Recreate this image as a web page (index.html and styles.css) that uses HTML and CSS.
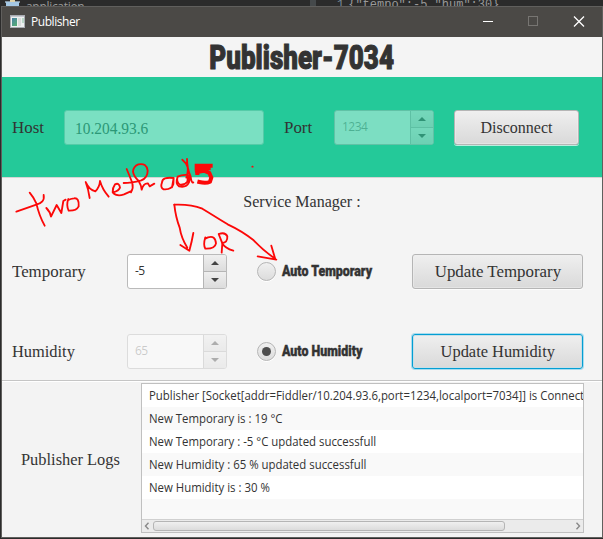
FILE: index.html
```html
<!DOCTYPE html>
<html lang="en">
<head>
<meta charset="utf-8">
<title>Publisher</title>
<link rel="stylesheet" href="styles.css">
</head>
<body>
<div class="desktop">
  <div class="backdrop">
    <svg class="backdrop-icon" width="16" height="8" viewBox="0 0 16 8"><path d="M0 1h15v2H0z" fill="#8293a0"/><path d="M1 2h13v5H1z" fill="#a5c8e4"/><path d="M5 0h5v2H5z" fill="#dfd2aa"/></svg>
    <span class="backdrop-name">application</span>
    <span class="backdrop-gutter"></span>
    <span class="backdrop-code"><i>1</i>{"tempo":-5,"hum":30}</span>
  </div>
  <main class="window">
    <header class="titlebar">
      <svg width="15" height="13" viewBox="0 0 15 13"><defs><linearGradient id="pic" x2=".6" y2="1"><stop stop-color="#4b82a5"/><stop offset="1" stop-color="#53a878"/></linearGradient></defs><rect x=".5" y=".5" width="14" height="12" fill="#edf0f0" stroke="#a9acb2"/><path d="M1 1.500h13" stroke="#c5c8cf"/><rect x="2" y="3" width="5" height="8" fill="url(#pic)"/><path d="M8 3h3v8H8z" fill="#d8dcda"/><path d="M12 3h2v5h-2z" fill="#b9d7c7"/></svg>
      <span class="caption">Publisher</span>
      <svg class="controls" width="102" height="12" viewBox="0 0 102 12"><path d="M0 6.500h10" stroke="#fff"/><rect x="45.500" y="1.500" width="9" height="9" fill="none" stroke="#777572"/><path d="M91 1.500l10 10M101 1.500l-10 10" stroke="#fff" stroke-width="1.300"/></svg>
    </header>
    <h1 class="heading"><span>Publisher-7034</span></h1>
    <section class="connection">
      <span class="label host"><span>Host</span></span>
      <div class="field"><span>10.204.93.6</span></div>
      <span class="label port"><span>Port</span></span>
      <div class="spinner off"><span class="value">1234</span><div class="steps"><b class="up"></b><b class="down"></b></div></div>
      <button class="btn disconnect"><span>Disconnect</span></button>
    </section>
    <section class="service">
      <h2><span>Service Manager :</span></h2>
      <div class="row">
        <span class="label temporary"><span>Temporary</span></span>
        <div class="spinner"><span class="value">-5</span><div class="steps"><b class="up"></b><b class="down"></b></div></div>
        <span class="radio"></span>
        <span class="choice auto-t"><span>Auto Temporary</span></span>
        <button class="btn upd-t"><span>Update Temporary</span></button>
      </div>
      <div class="row">
        <span class="label humidity"><span>Humidity</span></span>
        <div class="spinner off"><span class="value">65</span><div class="steps"><b class="up"></b><b class="down"></b></div></div>
        <span class="radio checked"></span>
        <span class="choice auto-h"><span>Auto Humidity</span></span>
        <button class="btn focus upd-h"><span>Update Humidity</span></button>
      </div>
    </section>
    <section class="logs">
      <span class="label logs-label"><span>Publisher Logs</span></span>
      <div class="list">
        <ul>
          <li><span class="l1">Publisher [Socket[addr=Fiddler/10.204.93.6,port=1234,localport=7034]] is Connected</span></li>
          <li><span class="l2">New Temporary is : 19 °C</span></li>
          <li><span class="l3">New Temporary : -5 °C updated successfull</span></li>
          <li><span class="l4">New Humidity : 65 % updated successfull</span></li>
          <li><span class="l5">New Humidity is : 30 %</span></li>
          <li></li>
        </ul>
        <div class="scroll">
          <svg width="6" height="8" viewBox="0 0 6 8"><path d="M4.500 .8L1.500 4l3 3.200" fill="none" stroke="#888" stroke-width="1.400"/></svg>
          <span class="thumb"></span>
          <svg class="right" width="6" height="8" viewBox="0 0 6 8"><path d="M1.500 .8L4.500 4l-3 3.200" fill="none" stroke="#888" stroke-width="1.400"/></svg>
        </div>
      </div>
    </section>
  </main>
  <svg class="ink" width="603" height="539" viewBox="0 0 603 539">
    <g transform="translate(0 155) scale(.33333)" fill="none" stroke="#fc0808" stroke-width="5.500" stroke-linecap="round" stroke-linejoin="round">
      <path d="M49 170Q78 160 109 149Q121 146 127 139Q133 133 131 120M89 113Q101 127 109 145Q117 181 134 212"/>
      <path d="M139 159Q151 171 153 185L170 150L184 174L190 138L197 134"/>
      <path d="M205 132Q198 150 206 167Q229 168 236 154Q238 128 222 130Q211 131 205 135"/>
      <path d="M257 81Q265 102 269 129M258 83Q267 104 286 109Q299 96 300 78Q307 103 326 125"/>
      <path d="M340 112Q356 108 360 98Q358 82 345 88Q338 97 338 112Q350 126 372 118L392 109"/>
      <path d="M380 42Q389 63 397 84Q401 98 393 112M371 84Q394 84 424 76Q443 68 443 47Q440 23 415 28Q400 34 399 50Q401 64 416 78Q424 91 425 104Q430 84 444 85L449 94L463 86"/>
      <path d="M521 69Q487 65 486 82Q480 98 491 103Q515 105 520 88L521 69L516 97"/>
      <path d="M547 14Q559 23 563 37Q565 48 559 68M561 12Q561 39 572 65Q574 85 580 82M533 65Q525 88 537 94Q559 99 567 82L570 61Q549 57 533 65Q528 79 539 89Q554 91 562 80L564 65"/>
      <path d="M590 32H632M590 40H626M591 51L612 47L628 54L634 68L630 80Q618 86 598 81M592 32V54M608 34V48" stroke-width="12" stroke-linecap="square" stroke-linejoin="miter"/>
      <path d="M757 35h1M523 149Q527 187 539 218Q544 250 562 278M541 270L568 287Q576 258 580 234"/>
      <path d="M523 149Q572 147 607 161Q640 181 683 208Q728 229 761 256Q794 290 823 309M814 272L826 313M773 304L829 314"/>
      <path d="M616 247Q609 270 616 281Q645 282 648 265Q646 240 624 247L616 251M656 237L667 265L665 293M656 237Q676 230 682 244Q683 263 666 264Q675 280 700 287"/>
    </g>
  </svg>
</div>
</body>
</html>
```
FILE: styles.css
```css
* { box-sizing: border-box; }
body { margin: 0; font-family: "Open Sans", "Noto Sans", sans-serif; color: #333; }
.desktop { position: relative; width: 603px; height: 539px; overflow: hidden; background: #2b2b2b; padding-left: 1px; }
.backdrop { height: 6px; overflow: hidden; display: flex; align-items: flex-start; color: #999; padding-left: 4px; }
.backdrop-icon { flex: none; }
.backdrop-name { width: 289px; margin-left: 5px; font-size: 12px; line-height: 13px; letter-spacing: -.3px; }
.backdrop-gutter { width: 6px; height: 6px; margin-left: -5px; background: #45494b; }
.backdrop-code { margin-left: 21px; font: 12px/11px "Liberation Mono", monospace; white-space: pre; }
.backdrop-code i { color: #789; font-style: normal; margin-right: 4px; }
.window { width: 602px; height: 532px; border: 1px solid #605f5d; background: #f4f4f4; display: grid; grid-template-rows: 30px 40px 100px 203px 1fr; }
.titlebar { background: #4b4946; color: #fff; display: flex; align-items: center; padding: 0 17px 2px 8px; }
.caption { margin-left: 6px; padding-top: 1px; font-size: 12px; letter-spacing: -.45px; }
.controls { margin-left: auto; }
span > span, h1 span, h2 span, button span, .field span, li span { display: inline-block; white-space: nowrap; }
.heading { margin: 0; display: flex; justify-content: center; align-items: center; font: 900 34px/40px Roboto, sans-serif; }
.heading span { transform: scaleX(.765); -webkit-text-stroke: 1.1px #333; }
.connection { background: #24c999; display: flex; align-items: center; padding-left: 10px; }
.label, h2, .btn, .field { font: 16px/20px "Liberation Serif", serif; }
.label { flex: none; padding-top: 2px; }
.host { width: 52px; }
.port { width: 50px; margin-left: 20px; }
.label span, .choice span, li span, .field span { transform-origin: 0 50%; }
.host span, .port span, .temporary span, .upd-t span { transform: scaleX(1.055); }
.humidity span, .logs-label span, .upd-h span { transform: scaleX(1.025); }
.field { width: 200px; height: 35px; padding: 8px 10px; border: 1px solid #55cba8; border-radius: 3px; background: #7ae0c2; color: #2c9877; }
.field span { transform: scaleX(.965); }
.spinner { width: 100px; height: 35px; flex: none; display: flex; background: #fff; border: 1px solid #bababa; border-radius: 3px; overflow: hidden; font-size: 12px; line-height: 31px; letter-spacing: -.5px; }
.spinner.off { opacity: .4; }
.off .value { color: #33333390; }
.value { flex: 1; padding-left: 7px; }
.steps { width: 23px; border-left: 1px solid #b5b5b5; display: grid; grid-template-rows: 17px 16px; }
.steps b { display: grid; place-items: center; background: linear-gradient(#efefef, #dcdcdc); }
.steps .up { border-bottom: 1px solid #b5b5b5; }
.steps b::before { content: ""; border: 4px solid transparent; border-top-width: 0; border-bottom: 4px solid #444; }
.steps .down::before { transform: rotate(180deg); }
.btn { flex: none; height: 35px; padding: 1px 0 0; color: #333; border: 1px solid #b5b5b5; border-radius: 3px; background: linear-gradient(#efefef, #d9d9d9); box-shadow: inset 0 0 0 1px #f0f0f080, 0 1px #ffffffb0; }
.btn.focus { border-color: #039ed3; box-shadow: 0 0 0 1px #a9dcee, inset 0 0 0 1px #c8dfe7; }
.connection .spinner { margin-right: 20px; }
.disconnect { width: 125px; }
.service { border-top: 1px solid #d4d4d4; display: grid; grid-template-rows: 53px 80px 70px; }
h2 { margin: 0; padding-top: 14px; text-align: center; font-weight: 400; }
.row { display: flex; align-items: center; height: 80px; padding-left: 10px; }
.row .label { width: 115px; }
.radio { width: 19px; height: 19px; margin-left: 30px; flex: none; border: 1px solid #b5b5b5; border-radius: 50%; background: linear-gradient(#f0f0f0, #dcdcdc); box-shadow: 0 1px #fff; }
.radio.checked { display: grid; place-items: center; }
.radio.checked::before { content: ""; width: 9px; height: 9px; border-radius: 50%; background: #4d4d4d; }
.choice { width: 130px; margin-left: 6px; font: 900 14px/18px Roboto, sans-serif; }
.choice span { transform: scaleX(.885); -webkit-text-stroke: .4px #333; }
.row .btn { width: 171px; }
.logs { border-top: 1px solid #c5c5c5; box-shadow: inset 0 1px #fff; display: flex; padding: 2px 0 0 19px; background: #f3f3f3; }
.logs-label { width: 120px; padding-top: 67px; }
.list { width: 443px; height: 150px; border: 1px solid #c0c0c0; background: #fff; overflow: hidden; }
ul { list-style: none; margin: 0; padding: 0; height: 135px; overflow: hidden; }
li { height: 23px; padding-left: 7px; font-size: 12px; line-height: 23px; }
li span { transform: scaleX(.95); }
li:nth-child(even) { background: #f9f9f9; }
.scroll { height: 13px; border-top: 1px solid #d0d0d0; background: #ebebeb; display: flex; align-items: center; padding: 0 2px; }
.thumb { width: 352px; height: 10px; margin-left: 3px; border: 1px solid #b5b5b5; border-radius: 3px; background: linear-gradient(#f0f0f0, #dcdcdc); }
.right { margin-left: auto; }
.ink { position: absolute; left: 0; top: 0; }
```
